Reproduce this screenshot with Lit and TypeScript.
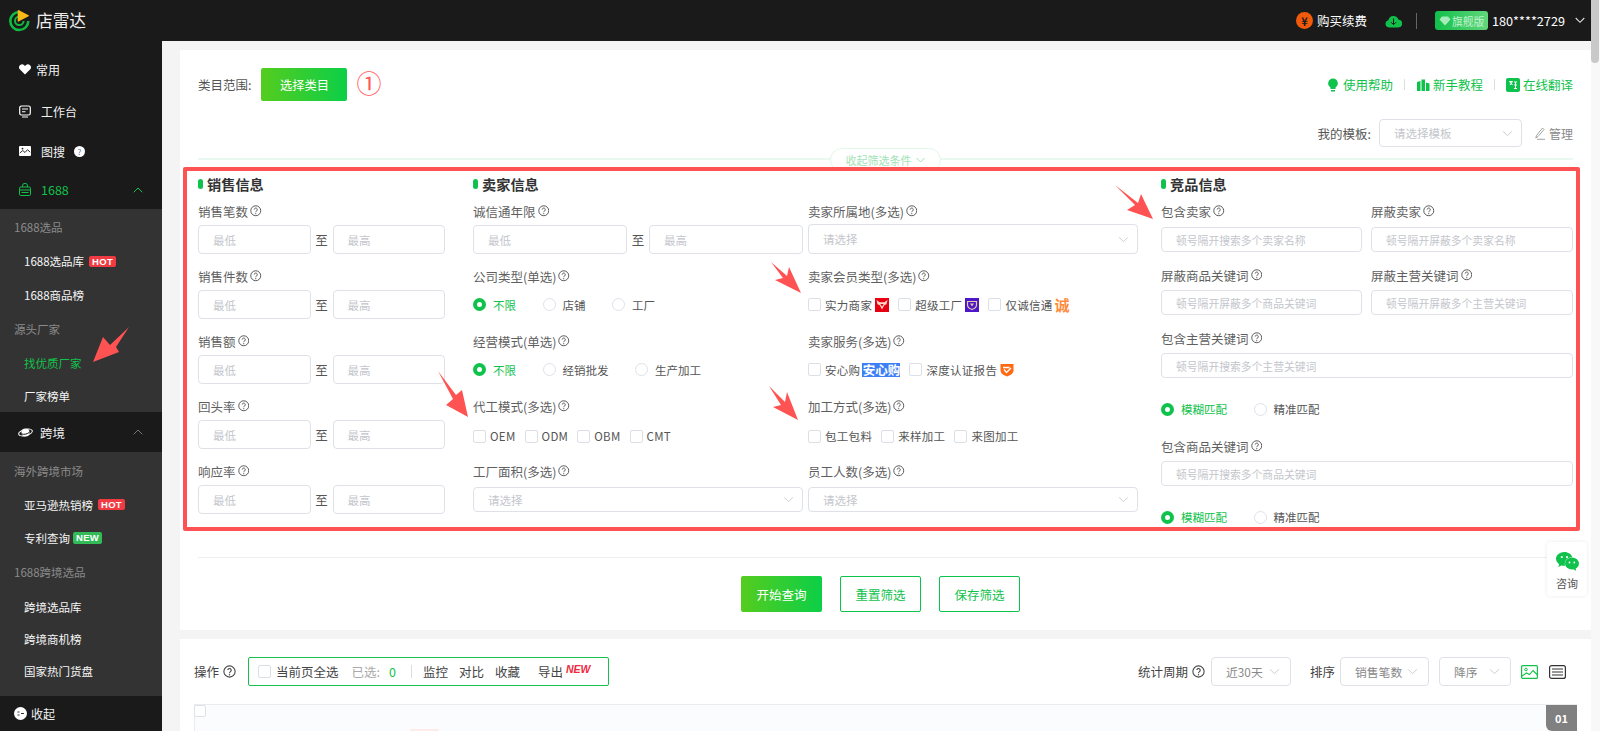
import { LitElement, html, css, svg } from "lit";
import { customElement } from "lit/decorators.js";

const help = () => html`<svg class="help" viewBox="0 0 12 12"><circle cx="6" cy="6" r="5.2" fill="none" stroke="currentColor" stroke-width="1"/><path d="M4.4 4.7a1.6 1.6 0 1 1 2.5 1.4c-.6.4-.9.7-.9 1.4" fill="none" stroke="currentColor" stroke-width="1"/><circle cx="6" cy="9" r=".6" fill="currentColor"/></svg>`;
const caret = () => html`<svg class="caret" viewBox="0 0 12 8"><path d="M1 1.5l5 5 5-5" fill="none" stroke="currentColor" stroke-width="1.1"/></svg>`;
const label = (t: string) => html`<div class="lb">${t}${help()}</div>`;
const range = () => html`<div class="range"><input placeholder="最低" /><span class="to">至</span><input placeholder="最高" /></div>`;
const radio = (t: string, on = false) => html`<span class="opt-r ${on ? "on" : ""}"><i class="rd"></i>${t}</span>`;
const check = (t: string) => html`<span class="opt-c"><i class="cb"></i>${t}</span>`;
const field = (t: string) => html`<div class="field">${label(t)}${range()}</div>`;

const bull = html`<svg class="bd" viewBox="0 0 14 14"><rect width="14" height="14" fill="#e60012"/><path d="M1.500 2l3.200 2.200h4.600L12.500 2l-1 4.300-2.200 1L7 11.500 4.700 7.300l-2.200-1z" fill="#ffd9c9"/><path d="M5.300 6h3.400L7 8.800z" fill="#e60012"/></svg>`;
const factory = html`<svg class="bd" viewBox="0 0 14 14"><rect width="14" height="14" fill="#4c16c9"/><path d="M2.500 3.500h9v3.500c0 2.500-2.500 3.800-4.500 4.500C5 10.800 2.500 9.500 2.500 7z" fill="none" stroke="#e8c9a0" stroke-width="1.200"/><path d="M5 5.500h4L7 8.500z" fill="#e8c9a0"/></svg>`;
const shield = html`<svg class="bd" viewBox="0 0 14 14"><path d="M.5 1h13v6.500c0 3-3.500 5-6.500 6C4 12.500.5 10.500.5 7.500z" fill="#ff6a13"/><path d="M3 4.500h6.500M4 6.500l2.500 3L11 5" fill="none" stroke="#fff" stroke-width="1.400"/></svg>`;

const arrows: string[] = [
  "93,362 103,337 110,345 129,327 116,347 119,352",
  "468,417 446,405 453,399 438,371 456,395 462,390",
  "801,293 775,280 783,278 771,262 787,276 789,267",
  "798,420 773,407 781,405 769,386 785,402 787,392",
  "1153,219 1127,210 1135,205 1115,185 1138,203 1141,194",
];

@customElement("app-root")
export class AppRoot extends LitElement {
  static styles = css`
    :host { display: block; position: relative; width: 1600px; height: 731px; overflow: hidden; background: #f4f4f4;
      font-family: "Noto Sans CJK SC", "Noto Sans", sans-serif; font-size: 12.500px; color: #333; }
    * { box-sizing: border-box; }
    i { font-style: normal; display: block; flex: none; }
    svg { display: block; flex: none; }
    .shell { display: flex; height: 731px; }
    .page { width: 1591px; display: flex; flex-direction: column; }
    .scroll { width: 9px; background: #f8f8f8; }
    .thumb { width: 8px; height: 63px; background: #c9c9c9; border-radius: 0 0 4px 4px; }

    header { height: 41px; flex: none; background: #1a1a1a; display: flex; align-items: center; padding: 0 6px 0 9px; color: #fff; }
    .logo { width: 22px; height: 22px; margin-right: 5px; }
    .brand { font-size: 16.700px; color: #eee; line-height: 1; }
    .hr { margin-left: auto; display: flex; align-items: center; }
    .yen { width: 17px; height: 17px; border-radius: 50%; background: #f25a0b; color: #1a1a1a; font-size: 11px; font-weight: 700; display: flex; align-items: center; justify-content: center; margin-right: 4px; }
    .cloud { width: 17px; height: 14px; margin-left: 18px; }
    .vsep { width: 1px; height: 16px; background: #666; margin: 0 18px 0 14px; }
    .vip { width: 53px; height: 19px; border-radius: 3px; background: linear-gradient(90deg, #10c04a, #62d67c); display: flex; align-items: center; padding-left: 4px; font-size: 10.800px; color: #c4f3d0; gap: 1px; }
    .vip svg { width: 12px; height: 10px; }
    .phone { font-size: 12.700px; margin: 0 10px 0 4px; color: #fff; }
    .hcaret { width: 10px; height: 7px; color: #ddd; }

    .body { flex: 1; display: flex; min-height: 0; }
    nav { width: 162px; flex: none; background: #1a1a1a; display: flex; flex-direction: column; color: #fff; padding-top: 8px; position: relative; }
    .item { display: flex; align-items: center; padding-left: 19px; font-size: 12px; color: #f2f2f2; }
    .top .item:nth-child(1) { height: 41px; }
    .top .item:nth-child(2) { height: 42px; }
    .top .item:nth-child(3) { height: 38px; }
    .top .item:nth-child(4) { height: 39px; }
    .item .ic { width: 12px; height: 13px; margin-right: 10px; }
    .item .ic.wide { width: 15px; margin: 0 7px 0 -1px; }
    .tight .ic { margin-right: 5px; }
    .item.green { color: #12c24a; font-size: 12.500px; }
    .item .chev { width: 10px; height: 6px; margin-left: auto; margin-right: 19px; color: #12c24a; }
    .item.cross { height: 40px; background: #1a1a1a; color: #f2f2f2; font-size: 12.500px; }
    .item.cross .chev { color: #777; }
    .navhelp { width: 11px; height: 11px; border-radius: 50%; background: #fff; color: #4a6fa8; font-size: 8px; display: flex; align-items: center; justify-content: center; margin-left: 9px; }
    .sub { background: #333; font-size: 11.500px; overflow: hidden; flex: none; }
    .sub.a { height: 203px; padding-top: 1px; }
    .sub.b { height: 244px; padding-top: 2.500px; }
    .sub.a > div { height: 34px; }
    .sub.a > div:nth-child(6) { margin-top: -1px; }
    .sub.b > div { height: 33.500px; }
    .sub.b > div:nth-child(5) { margin-top: 2px; }
    .sub.b > div:nth-child(n+5) { height: 32px; }
    .sub > div { display: flex; align-items: center; }
    .gt { padding-left: 14px; color: #8a8a8a; }
    .si { padding-left: 24px; color: #f5f5f5; }
    .si.cur { color: #12c24a; }
    .tag { font: 700 9.500px "Liberation Sans", sans-serif; color: #fff; border-radius: 2px; padding: 0 3px; height: 11px; line-height: 11px; margin-left: 3px; letter-spacing: .3px; }
    .tag.hot { background: #f23a42; margin-left: 5px; }
    .tag.new { background: #33bb58; height: 12px; line-height: 12px; }
    .fold { height: 35px; flex: none; display: flex; align-items: center; padding-left: 14px; gap: 4px; font-size: 12px; color: #f2f2f2; }
    .fold svg { width: 13px; height: 13px; }

    main { flex: 1; padding: 9px 0 0 18px; min-width: 0; overflow: hidden; }
    .p1 { height: 580px; background: #fff; padding: 18px 18px 0; }
    .r1 { display: flex; align-items: center; height: 33px; color: #555; }
    .cat { margin-left: 10px; width: 86px; height: 33px; border-radius: 2px; background: linear-gradient(90deg, #55cc1f, #0ccf47); color: #fff; display: flex; align-items: center; justify-content: center; font-size: 12.300px; }
    .no1 { color: #ff5a5a; font-size: 25px; margin: -5px 0 0 9px; line-height: 1; }
    .links { margin-left: auto; display: flex; align-items: center; color: #0fc24c; }
    .links svg { width: 14px; height: 14px; margin-right: 3px; }
    .links b { font-weight: 400; }
    .links i { width: 1px; height: 11px; background: #ddd; margin: 0 11px 0 11px; }
    .r2 { display: flex; align-items: center; justify-content: flex-end; height: 28px; margin-top: 18px; color: #555; }
    .r2 .sel { width: 143px; height: 28px; margin: 0 13px 0 8px; }
    .manage { color: #888; display: flex; align-items: center; gap: 4px; font-size: 12px; }
    .manage svg { width: 10px; height: 13px; }
    .collapse { height: 24px; margin-top: 1px; position: relative; display: flex; justify-content: center; align-items: center; }
    .collapse::before { content: ""; position: absolute; left: 0; right: 0; top: 10px; height: 2px; background: #e9f9ef; border-radius: 2px; }
    .tab { position: relative; margin-left: -1px; width: 111px; height: 24px; border: 1px solid #e2f8e9; border-radius: 12px; background: #fff; color: #9fe3b6; font-size: 11px; display: flex; align-items: center; justify-content: center; gap: 4px; }
    .tab svg { width: 9px; height: 6px; color: #9fe3b6; }

    .red { position: relative; margin: -5px -7px 0 -15px; height: 364px; border: 4px solid #ff5252; border-radius: 2px; padding: 0 3px 0 11px; display: flex; background: #fff; }
    .ga { width: 247px; margin-right: 28px; }
    .gb { width: 665px; margin-right: 23px; }
    .gc { width: 412px; }
    .hd { height: 26px; display: flex; align-items: center; gap: 4px; font-size: 14.200px; font-weight: 700; color: #333; }
    .hd::before { content: ""; width: 5px; height: 10px; border-radius: 3px; background: #0fc24c; }
    .field { height: 65px; }
    .lb { height: 28px; display: flex; align-items: center; gap: 2px; color: #5f5f5f; font-size: 12.500px; }
    .help { width: 11.500px; height: 11.500px; color: #555; }
    .range { display: flex; align-items: center; height: 29px; }
    .to { width: 22px; text-align: center; color: #555; flex: none; }
    input { flex: 1; min-width: 0; width: 100%; height: 29px; border: 1px solid #dfe1e9; border-radius: 4px; padding: 0 0 0 14px; font: 11.500px "Noto Sans CJK SC", sans-serif; outline: none; background: #fff; }
    input::placeholder { color: #c4c6cc; opacity: 1; }
    .sel { display: flex; align-items: center; justify-content: space-between; border: 1px solid #dfe1e9; border-radius: 4px; padding: 0 8px 0 14px; font-size: 11.500px; color: #c4c6cc; background: #fff; }
    .caret { width: 11px; height: 7px; color: #c8cad2; }
    .gb-grid { display: grid; grid-template-columns: 330px 330px; column-gap: 5px; }
    .sel.big { height: 30px; margin-top: -1px; }
    .sel.low { height: 25px; margin-top: 2px; }
    .opts { height: 29px; display: flex; align-items: center; font-size: 11.500px; color: #555; }
    .opts.chk { gap: 9px; }
    .opts.rad { gap: 26.500px; }
    .opts.d { padding-top: 3px; }
    .opt-c { display: flex; align-items: center; gap: 4px; letter-spacing: .3px; }
    .cb { width: 13px; height: 13px; border: 1px solid #dcdfe6; border-radius: 2px; background: #fff; }
    .opt-r { display: flex; align-items: center; gap: 7px; }
    .rd { width: 13px; height: 13px; border: 1px solid #dfe1e9; border-radius: 50%; }
    .on { color: #0fc24c; }
    .on .rd { border: 4px solid #0fc24c; }
    .bd { width: 14px; height: 14px; margin-left: -6px; }
    .cheng { color: #ff8b3e; font-size: 15px; font-weight: 700; margin-left: -7px; line-height: 14px; }
    .axg { background: #3d80f5; color: #fff; font-size: 12.500px; font-weight: 700; height: 14px; line-height: 14px; width: 38px; text-align: center; margin-left: -7px; }
    .gc-grid { display: grid; grid-template-columns: 201px 202px; column-gap: 9px; }
    .gc input { height: 25px; font-size: 10.800px; }
    .c1 { height: 64px; } .c1 input { margin-top: 2px; }
    .c2 { height: 63px; } .c2 input { margin-top: 1px; }
    .c3 input, .c4 input { margin-top: 1px; display: block; }
    .gc .opts { height: 20px; margin-top: 21px; }
    .c4 { margin-top: 13px; }

    .dv { height: 1px; background: #eee; margin-top: 26px; }
    .acts { display: flex; justify-content: center; gap: 18px; margin-top: 18px; padding-right: 10px; }
    .btn { width: 81px; height: 36px; display: flex; align-items: center; justify-content: center; border: 1px solid #0cc44c; border-radius: 2px; color: #0fc24c; font-size: 12.500px; }
    .btn.pri { border: none; background: linear-gradient(90deg, #55cc1f, #0ccf47); color: #fff; }

    .p2 { margin-top: 9px; background: #fff; height: 92px; padding: 18px 14px 0; overflow: hidden; }
    .tb { display: flex; align-items: center; height: 29px; color: #444; }
    .tb .help { width: 13px; height: 13px; margin-left: 4px; color: #444; }
    .box { display: flex; align-items: center; height: 29px; width: 361px; margin-left: 12px; border: 1px solid #12c24a; border-radius: 2px; padding-left: 9px; }
    .box .cb { margin-right: 5px; }
    .muted { color: #aaa; margin-left: 13px; }
    .zero { color: #0fc24c; margin-left: 9px; }
    .bar { width: 1px; height: 13px; background: #ddd; margin: 0 11px 0 15px; }
    .lnk { margin-right: 11px; }
    .nw { color: #f0293f; font: italic 700 10.500px "Liberation Sans", sans-serif; margin: -6px 0 0 3px; }
    .tr { margin-left: auto; display: flex; align-items: center; margin-right: 11px; }
    .tb .sel { height: 29px; color: #888; font-size: 11.800px; padding-right: 10px; }
    .s80 { width: 80px; margin-left: 6px; }
    .s89 { width: 89px; margin: 0 10px 0 5px; }
    .s72 { width: 72px; margin-right: 10px; }
    .lab2 { margin-left: 19px; }
    .ii { width: 17px; height: 14px; }
    .ii.l { margin-left: 11px; }
    .table { position: relative; height: 40px; margin-top: 18px; border: 1px solid #ececf0; border-bottom: none; background: #fbfcfe; display: flex; justify-content: space-between; }
    .table .cb { width: 12px; height: 12px; margin: 0 0 0 -1px; border-color: #dfe1e9; }
    .page-no { width: 31px; height: 26px; background: #808080; color: #fff; font-size: 11px; font-weight: 700; display: flex; align-items: center; justify-content: center; border-radius: 0 0 0 6px; margin-right: -1px; }
    .pink { position: absolute; left: 215px; top: 24px; width: 29px; height: 6px; background: #ffeaea; border-radius: 2px 2px 0 0; }

    .consult { position: absolute; left: 1547px; top: 542px; width: 40px; height: 54px; background: #fff; border-radius: 4px; box-shadow: 0 0 4px rgba(0,0,0,.08); display: flex; flex-direction: column; align-items: center; padding-top: 10px; font-size: 11px; color: #555; gap: 4px; }
    .consult svg { width: 23px; height: 19px; }
    .marks { position: absolute; left: 0; top: 0; pointer-events: none; }
  `;

  render() {
    return html`
      <div class="shell">
        <div class="page">
          <header>
            <svg class="logo" viewBox="0 0 22 22">
              <path d="M10.500 2A9 9 0 1 0 19.300 11" fill="none" stroke="#10b93f" stroke-width="2.600"/>
              <path d="M10.300 6.500a4.300 4.300 0 1 0 4.300 4.500" fill="none" stroke="#10b93f" stroke-width="2"/>
              <path d="M8.700.5c0-.4.4-.6.8-.4L19.600 5.300c.4.300.4.800 0 1L9.500 11.600c-.4.200-.8 0-.8-.4z" fill="#f6bb14"/>
            </svg>
            <span class="brand">店雷达</span>
            <div class="hr">
              <span class="yen">¥</span><span>购买续费</span>
              <svg class="cloud" viewBox="0 0 17 14"><path d="M4 13.500a3.700 3.700 0 0 1-.6-7.300 5.200 5.200 0 0 1 10-.6 3.900 3.900 0 0 1-.3 7.900z" fill="#10c04a"/><path d="M8.500 4.500v6M6 8.200l2.500 2.500L11 8.200" fill="none" stroke="#1a1a1a" stroke-width="1"/></svg>
              <span class="vsep"></span>
              <span class="vip"><svg viewBox="0 0 12 10"><path d="M3 .5h6L11.500 3.500 6 9.500.5 3.500z" fill="#a7ebbb"/></svg>旗舰版</span>
              <span class="phone">180****2729</span>
              <svg class="hcaret" viewBox="0 0 10 7"><path d="M.7 1l4.300 4.300L9.300 1" fill="none" stroke="currentColor" stroke-width="1.100"/></svg>
            </div>
          </header>
          <div class="body">
            <nav>
              <div class="top">
                <div class="item tight"><svg class="ic" viewBox="0 0 12 13"><path d="M6 11.500L1 6.500a3 3 0 0 1 0-4.200 3 3 0 0 1 4.200 0L6 3l.8-.7a3 3 0 0 1 4.200 0 3 3 0 0 1 0 4.200z" fill="#fff"/></svg>常用</div>
                <div class="item"><svg class="ic" viewBox="0 0 12 13"><rect x=".7" y="1" width="10.600" height="9" rx="1.800" fill="none" stroke="#fff" stroke-width="1.200"/><path d="M3 4h6M3 6.800h3.500M3 12h6" stroke="#fff" stroke-width="1.100"/></svg>工作台</div>
                <div class="item"><svg class="ic" viewBox="0 0 12 13"><rect y="1" width="12" height="10" rx="1" fill="#fff"/><path d="M.8 8l3-2.500 2.200 2 2.500-2.800 2.700 2.500" fill="none" stroke="#1a1a1a" stroke-width=".9"/><circle cx="3.500" cy="3.600" r=".9" fill="#1a1a1a"/></svg>图搜<span class="navhelp">?</span></div>
                <div class="item green"><svg class="ic" viewBox="0 0 12 13"><path d="M3.500 4V2.800a2.500 2.500 0 0 1 5 0V4" fill="none" stroke="#12c24a" stroke-width="1"/><rect x=".5" y="4" width="11" height="8.500" rx="1.200" fill="none" stroke="#12c24a" stroke-width="1"/><path d="M.5 7h11M2.500 9.500h7" stroke="#12c24a" stroke-width="1.200"/></svg>1688<svg class="chev" viewBox="0 0 10 6"><path d="M.7 5.300L5 1l4.300 4.300" fill="none" stroke="currentColor" stroke-width="1"/></svg></div>
              </div>
              <div class="sub a">
                <div class="gt">1688选品</div>
                <div class="si">1688选品库<span class="tag hot">HOT</span></div>
                <div class="si">1688商品榜</div>
                <div class="gt">源头厂家</div>
                <div class="si cur">找优质厂家</div>
                <div class="si">厂家榜单</div>
              </div>
              <div class="item cross"><svg class="ic wide" viewBox="0 0 15 13"><ellipse cx="7.500" cy="6.500" rx="7" ry="3" fill="none" stroke="#fff" stroke-width="1.100" transform="rotate(-15 7.500 6.500)"/><circle cx="7.500" cy="6.500" r="4" fill="#fff"/><path d="M3.500 8c3 .8 6 0 8-1.800" fill="none" stroke="#1a1a1a" stroke-width="1"/></svg>跨境<svg class="chev" viewBox="0 0 10 6"><path d="M.7 5.300L5 1l4.300 4.300" fill="none" stroke="currentColor" stroke-width="1"/></svg></div>
              <div class="sub b">
                <div class="gt">海外跨境市场</div>
                <div class="si">亚马逊热销榜<span class="tag hot">HOT</span></div>
                <div class="si">专利查询<span class="tag new">NEW</span></div>
                <div class="gt">1688跨境选品</div>
                <div class="si">跨境选品库</div>
                <div class="si">跨境商机榜</div>
                <div class="si">国家热门货盘</div>
              </div>
              <div class="fold"><svg viewBox="0 0 13 13"><circle cx="6.500" cy="6.500" r="6.500" fill="#fff"/><path d="M3.500 5h2M3.500 8h2M7 6.500h3" stroke="#333" stroke-width="1"/></svg>收起</div>
            </nav>
            <main>
              <section class="p1">
                <div class="r1">
                  <span>类目范围:</span><span class="cat">选择类目</span><span class="no1">①</span>
                  <div class="links">
                    <svg viewBox="0 0 14 14"><path d="M7 .5a4.800 4.800 0 0 1 2.500 8.900V11h-5V9.400A4.800 4.800 0 0 1 7 .5z" fill="#0fc24c"/><rect x="5" y="12" width="4" height="1.500" fill="#0fc24c"/></svg><b>使用帮助</b><i></i>
                    <svg viewBox="0 0 14 14"><path d="M1 4l3.500-1v10H1zM5.500 1.500H9V13H5.500zM10 4.500l3.500 1V13H10z" fill="#0fc24c"/></svg><b>新手教程</b><i></i>
                    <svg viewBox="0 0 14 14"><rect width="14" height="14" rx="2" fill="#0fc24c"/><path d="M3.500 3.500h3L4 7M3.500 3.500L6.500 7M8 4h3M9.500 4v6.500M8 7h3M8 10.500h3" fill="none" stroke="#fff" stroke-width="1"/></svg><b>在线翻译</b>
                  </div>
                </div>
                <div class="r2">
                  <span>我的模板:</span>
                  <div class="sel"><span>请选择模板</span>${caret()}</div>
                  <span class="manage"><svg viewBox="0 0 10 13"><path d="M7.500 1l1.500 1.500L3 9.500.8 11l.7-2.500zM2 12.300h8" fill="none" stroke="#999" stroke-width=".9"/></svg>管理</span>
                </div>
                <div class="collapse"><span class="tab">收起筛选条件<svg viewBox="0 0 9 6"><path d="M.5 1l4 4 4-4" fill="none" stroke="currentColor" stroke-width="1"/></svg></span></div>
                <div class="red">
                  <div class="ga">
                    <div class="hd">销售信息</div>
                    ${field("销售笔数")}${field("销售件数")}${field("销售额")}${field("回头率")}${field("响应率")}
                  </div>
                  <div class="gb">
                    <div class="hd">卖家信息</div>
                    <div class="gb-grid">
                      ${field("诚信通年限")}
                      <div class="field">${label("卖家所属地(多选)")}<div class="sel big"><span>请选择</span>${caret()}</div></div>
                      <div class="field">${label("公司类型(单选)")}<div class="opts rad">${radio("不限", true)}${radio("店铺")}${radio("工厂")}</div></div>
                      <div class="field">${label("卖家会员类型(多选)")}<div class="opts chk">${check("实力商家")}${bull}${check("超级工厂")}${factory}${check("仅诚信通")}<span class="cheng">诚</span></div></div>
                      <div class="field">${label("经营模式(单选)")}<div class="opts rad">${radio("不限", true)}${radio("经销批发")}${radio("生产加工")}</div></div>
                      <div class="field">${label("卖家服务(多选)")}<div class="opts chk">${check("安心购")}<span class="axg">安心购</span>${check("深度认证报告")}${shield}</div></div>
                      <div class="field">${label("代工模式(多选)")}<div class="opts chk d">${check("OEM")}${check("ODM")}${check("OBM")}${check("CMT")}</div></div>
                      <div class="field">${label("加工方式(多选)")}<div class="opts chk d">${check("包工包料")}${check("来样加工")}${check("来图加工")}</div></div>
                      <div class="field">${label("工厂面积(多选)")}<div class="sel low"><span>请选择</span>${caret()}</div></div>
                      <div class="field">${label("员工人数(多选)")}<div class="sel low"><span>请选择</span>${caret()}</div></div>
                    </div>
                  </div>
                  <div class="gc">
                    <div class="hd">竞品信息</div>
                    <div class="gc-grid">
                      <div class="c1">${label("包含卖家")}<input placeholder="顿号隔开搜索多个卖家名称" /></div>
                      <div class="c1">${label("屏蔽卖家")}<input placeholder="顿号隔开屏蔽多个卖家名称" /></div>
                      <div class="c2">${label("屏蔽商品关键词")}<input placeholder="顿号隔开屏蔽多个商品关键词" /></div>
                      <div class="c2">${label("屏蔽主营关键词")}<input placeholder="顿号隔开屏蔽多个主营关键词" /></div>
                    </div>
                    <div class="c3">${label("包含主营关键词")}<input placeholder="顿号隔开搜索多个主营关键词" /></div>
                    <div class="opts rad">${radio("模糊匹配", true)}${radio("精准匹配")}</div>
                    <div class="c4">${label("包含商品关键词")}<input placeholder="顿号隔开搜索多个商品关键词" /></div>
                    <div class="opts rad">${radio("模糊匹配", true)}${radio("精准匹配")}</div>
                  </div>
                </div>
                <div class="dv"></div>
                <div class="acts"><span class="btn pri">开始查询</span><span class="btn">重置筛选</span><span class="btn">保存筛选</span></div>
              </section>
              <section class="p2">
                <div class="tb">
                  <span>操作</span>${help()}
                  <div class="box">
                    <i class="cb"></i><span>当前页全选</span><span class="muted">已选:</span><span class="zero">0</span><i class="bar"></i>
                    <span class="lnk">监控</span><span class="lnk">对比</span><span class="lnk">收藏</span><span style="margin-left:7px">导出</span><span class="nw">NEW</span>
                  </div>
                  <div class="tr">
                    <span>统计周期</span>${help()}
                    <div class="sel s80"><span>近30天</span>${caret()}</div>
                    <span class="lab2">排序</span>
                    <div class="sel s89"><span>销售笔数</span>${caret()}</div>
                    <div class="sel s72"><span>降序</span>${caret()}</div>
                    <svg class="ii" viewBox="0 0 17 14"><rect x=".6" y=".6" width="15.800" height="12.800" rx="1" fill="none" stroke="#12c24a" stroke-width="1.200"/><circle cx="5" cy="4.500" r="1.300" fill="none" stroke="#12c24a"/><path d="M1 11l4.500-3 3 1.500 3.500-4 4.500 4.500" fill="none" stroke="#12c24a" stroke-width="1.100"/></svg>
                    <svg class="ii l" viewBox="0 0 17 14"><rect x=".6" y=".6" width="15.800" height="12.800" rx="2" fill="none" stroke="#333" stroke-width="1.200"/><path d="M3 4h11M3 7h11M3 10h11" stroke="#333" stroke-width="1.200"/></svg>
                  </div>
                </div>
                <div class="table"><i class="cb"></i><i class="pink"></i><span class="page-no">01</span></div>
              </section>
            </main>
          </div>
        </div>
        <div class="scroll"><div class="thumb"></div></div>
      </div>
      <div class="consult">
        <svg viewBox="0 0 23 19"><path d="M8.500 0C3.800 0 0 3 0 6.800c0 2.200 1.300 4.100 3.200 5.400L2.400 15l3-1.600c1 .3 2 .4 3.100.4h.6A6.500 6.500 0 0 1 16.500 5.400C15.400 2.300 12.200 0 8.500 0z" fill="#0fc24c"/><ellipse cx="16" cy="11.500" rx="7" ry="6" fill="#0fc24c"/><path d="M19.500 16l.8 3-3-1.800z" fill="#0fc24c"/><circle cx="5.800" cy="5" r="1.100" fill="#fff"/><circle cx="11" cy="5" r="1.100" fill="#fff"/><circle cx="13.500" cy="10.500" r=".9" fill="#fff"/><circle cx="18.300" cy="10.500" r=".9" fill="#fff"/></svg>
        <span>咨询</span>
      </div>
      <svg class="marks" width="1600" height="731" viewBox="0 0 1600 731">
        ${arrows.map((p) => svg`<polygon points=${p} fill="#ff5252"></polygon>`)}
      </svg>
    `;
  }
}
